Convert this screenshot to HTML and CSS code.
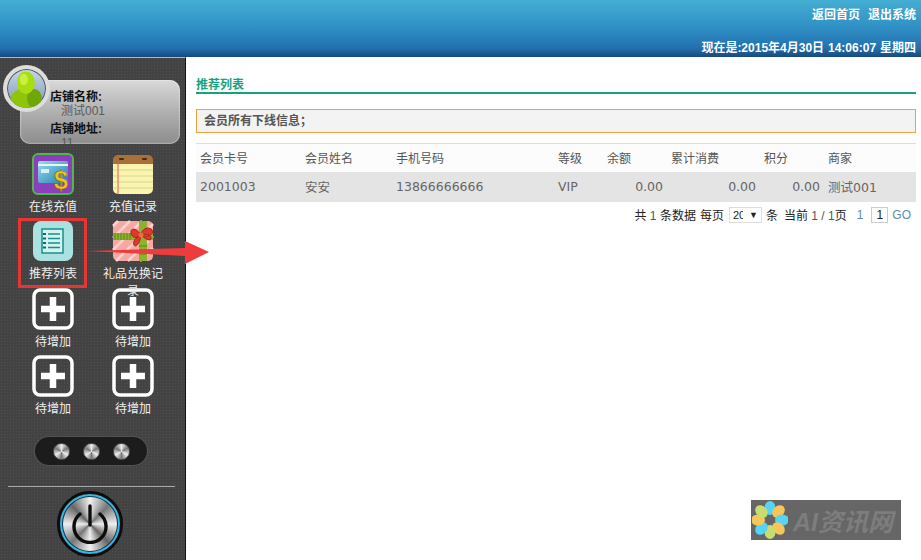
FILE: index.html
```html
<!DOCTYPE html>
<html lang="en">
<head>
    <meta charset="UTF-8">
    <title>推荐列表</title>
    <link rel="stylesheet" href="styles.css">
</head>
<body>
    <header class="top">
        <div class="top-links"><a>返回首页</a><a>退出系统</a></div>
        <div class="top-date">现在是:2015年4月30日 14:06:07 星期四</div>
    </header>
    <div class="main">
        <aside class="side">
            <div class="shop">
                <div class="avatar">
                    <svg width="38" height="38" viewBox="0 0 36 36">
                        <ellipse cx="17" cy="29" rx="15" ry="12" fill="#8fc40a"/>
                        <ellipse cx="25" cy="27" rx="7" ry="9" fill="#6fa708"/>
                        <ellipse cx="17" cy="12" rx="8.5" ry="10.5" fill="#a6de12"/>
                        <ellipse cx="15" cy="9" rx="4" ry="5.5" fill="#c9f03e"/>
                    </svg>
                </div>
                <dl class="shop-info">
                    <dt>店铺名称:</dt>
                    <dd>测试001</dd>
                    <dt>店铺地址:</dt>
                    <dd>11</dd>
                </dl>
            </div>
            <nav class="menu">
                <a class="menu-item">
                    <svg class="icon" viewBox="0 0 42 42">
                        <defs>
                            <linearGradient id="card" x1="0" y1="0" x2="1" y2="1">
                                <stop offset="0" stop-color="#9fdcea"/>
                                <stop offset="1" stop-color="#1f7fb0"/>
                            </linearGradient>
                        </defs>
                        <rect x="1" y="1" width="40" height="40" rx="5" fill="#8b3fbf" stroke="#4fb848" stroke-width="2"/>
                        <rect x="6" y="8" width="30" height="22" rx="2" fill="url(#card)"/>
                        <rect x="6" y="11" width="30" height="2" fill="#e4f6fa"/>
                        <rect x="9" y="16" width="8" height="4" fill="#d7eef5"/>
                        <text x="29" y="36" class="dollar">$</text>
                    </svg>
                    <span>在线充值</span>
                </a>
                <a class="menu-item">
                    <svg class="icon" viewBox="0 0 42 42">
                        <rect x="1" y="4" width="40" height="37" rx="5" fill="#fbf3ae"/>
                        <path d="M1 17h40M1 23h40M1 29h40M1 35h40" stroke="#cfd99a" stroke-width="1"/>
                        <path d="M6 10v31" stroke="#ee8a6a" stroke-width="1.5"/>
                        <path d="M1 11v-4a5 5 0 0 1 5-5h30a5 5 0 0 1 5 5v4z" fill="#a8703a"/>
                        <rect x="7" y="5" width="5" height="2" rx="1" fill="#4a2c12"/>
                        <rect x="30" y="5" width="5" height="2" rx="1" fill="#4a2c12"/>
                    </svg>
                    <span>充值记录</span>
                </a>
                <a class="menu-item">
                    <svg class="icon" viewBox="0 0 42 42">
                        <rect x="1" y="1" width="40" height="40" rx="8" fill="#a9e2e0"/>
                        <rect x="10" y="9" width="21" height="24" fill="#d5f2ef" stroke="#14908c" stroke-width="1.5"/>
                        <path d="M16 14h12M16 18.500h12M16 23h12M16 27.500h12" stroke="#14908c" stroke-width="1.5"/>
                        <path d="M11 14h3M11 18.500h3M11 23h3M11 27.500h3" stroke="#0c6e6c" stroke-width="2.200"/>
                    </svg>
                    <span>推荐列表</span>
                </a>
                <a class="menu-item">
                    <svg class="icon" viewBox="0 0 42 42">
                        <rect x="1" y="1" width="40" height="40" rx="5" fill="#f6a9a3"/>
                        <path d="M6 1l-5 5M18 1L1 18M30 1L1 30M41 4L4 41M41 16L16 41M41 28L28 41" stroke="#fbd3cf" stroke-width="2.500"/>
                        <rect x="1" y="13" width="40" height="7" fill="#8cb32c"/>
                        <rect x="27" y="1" width="8" height="40" fill="#8cb32c"/>
                        <path d="M3 13v7M6 13v7M9 13v7M12 13v7M15 13v7M18 13v7M27 26h8M27 30h8M27 34h8" stroke="#5f8418" stroke-width="1"/>
                        <path d="M29 15c-5-8-11-7-10-2s5 6 10 2c1-7 8-9 11-5s-4 8-11 5c-5 2-9 7-7 10s6-2 7-10c3 3 9 7 10 4s-3-6-10-4z" fill="#dd3a2c" stroke="#a8211a" stroke-width="1"/>
                        <circle cx="29" cy="15" r="2.500" fill="#f0694f"/>
                    </svg>
                    <span>礼品兑换记录</span>
                </a>
                <a class="menu-item">
                    <svg class="icon" viewBox="0 0 42 42"><use href="#plus"/></svg>
                    <span>待增加</span>
                </a>
                <a class="menu-item">
                    <svg class="icon" viewBox="0 0 42 42"><use href="#plus"/></svg>
                    <span>待增加</span>
                </a>
                <a class="menu-item">
                    <svg class="icon" viewBox="0 0 42 42"><use href="#plus"/></svg>
                    <span>待增加</span>
                </a>
                <a class="menu-item">
                    <svg class="icon" viewBox="0 0 42 42"><use href="#plus"/></svg>
                    <span>待增加</span>
                </a>
            </nav>
            <div class="knobs"><i></i><i></i><i></i></div>
            <div class="side-foot">
                <div class="power">
                    <svg width="40" height="40" viewBox="0 0 40 40" fill="none" stroke="#0d0d0d" stroke-width="3.400" stroke-linecap="round">
                        <path d="M10 10a16 16 0 1 0 20 0"/>
                        <path d="M20 2v19"/>
                    </svg>
                </div>
            </div>
        </aside>
        <main class="content">
            <h2 class="title"><span>推荐列表</span></h2>
            <div class="notice">会员所有下线信息；</div>
            <table class="list">
                <colgroup>
                    <col class="c1"><col class="c2"><col class="c3"><col class="c4">
                    <col class="c5"><col class="c6"><col class="c7"><col class="c8">
                </colgroup>
                <thead>
                    <tr>
                        <th>会员卡号</th><th>会员姓名</th><th>手机号码</th><th>等级</th>
                        <th>余额</th><th>累计消费</th><th>积分</th><th>商家</th>
                    </tr>
                </thead>
                <tbody>
                    <tr>
                        <td>2001003</td><td>安安</td><td>13866666666</td><td>VIP</td>
                        <td class="num">0.00</td><td class="num">0.00</td><td class="num">0.00</td><td>测试001</td>
                    </tr>
                </tbody>
            </table>
            <div class="pager">
                <span class="page-total">共 <b>1</b> 条数据</span>
                <span>每页</span>
                <span class="page-size"><em>20</em><i>▼</i></span>
                <span>条</span>
                <span class="page-now">当前 <b>1 / 1</b>页</span>
                <a>1</a>
                <span class="page-input">1</span>
                <a class="page-go">GO</a>
            </div>
        </main>
    </div>

    <svg class="defs" width="0" height="0">
        <symbol id="plus" viewBox="0 0 42 42">
            <rect x="2" y="2" width="38" height="38" rx="6" fill="none" stroke="#fff" stroke-width="3.500"/>
            <path d="M21 9v24M9 21h24" stroke="#fff" stroke-width="6.500"/>
        </symbol>
    </svg>

    <div class="mark-box"></div>
    <svg class="mark-arrow" width="122" height="24" viewBox="0 0 122 24">
        <polygon points="0,10 98,7 98,0 122,11 98,23 98,15" fill="#ee3b3b"/>
    </svg>

    <div class="watermark">
        <svg width="36" height="40" viewBox="0 0 36 40">
            <g transform="translate(18 20)">
                <ellipse cy="-12" rx="5.500" ry="7" fill="#55d4f4"/>
                <ellipse cy="-12" rx="5.500" ry="7" fill="#f7c65a" transform="rotate(45)"/>
                <ellipse cy="-12" rx="5.500" ry="7" fill="#55d4f4" transform="rotate(90)"/>
                <ellipse cy="-12" rx="5.500" ry="7" fill="#f7c65a" transform="rotate(135)"/>
                <ellipse cy="-12" rx="5.500" ry="7" fill="#c9dc70" transform="rotate(180)"/>
                <ellipse cy="-12" rx="5.500" ry="7" fill="#55d4f4" transform="rotate(225)"/>
                <ellipse cy="-12" rx="5.500" ry="7" fill="#f7c65a" transform="rotate(270)"/>
                <ellipse cy="-12" rx="5.500" ry="7" fill="#c9dc70" transform="rotate(315)"/>
            </g>
        </svg>
        <span>AI资讯网</span>
    </div>
</body>
</html>
```
FILE: styles.css
```css
* {
    box-sizing: border-box;
}
body {
    margin: 0;
    height: 100vh;
    overflow: hidden;
    display: flex;
    flex-direction: column;
    background-color: #fff;
    color: #555;
    font-family: "Liberation Sans", "Noto Sans CJK SC", sans-serif;
    font-size: 12px;
}
.top {
    height: 57px;
    flex: none;
    padding: 8px 5px 0 0;
    background: linear-gradient(#45aed3 0, #2f8fc4 50%, #2170ae 85%, #17497c 100%);
    color: #fff;
    font-weight: bold;
    text-align: right;
}
.top-links {
    height: 14px;
    line-height: 14px;
}
.top-links a {
    margin-left: 8px;
}
.top-date {
    margin-top: 19px;
    line-height: 14px;
    word-spacing: 0.6px;
}
.main {
    flex: 1;
    display: flex;
    min-height: 0;
}

/* left column */
.side {
    width: 186px;
    flex: none;
    padding-top: 22px;
    background-color: #434343;
    background-image: radial-gradient(rgba(255,255,255,0.07) 0.7px, transparent 1px);
    background-size: 3px 3px;
    border-right: 1px solid #111;
    border-top: 1px solid #9cc3da;
    overflow: hidden;
}
.shop {
    position: relative;
    width: 160px;
    height: 64px;
    margin-left: 20px;
    border-radius: 10px;
    background: linear-gradient(#d9d9d9 0, #b4b4b4 45%, #8c8c8c 100%);
    box-shadow: inset 0 0 2px #fff;
}
.avatar {
    position: absolute;
    left: -17px;
    top: -15px;
    width: 47px;
    height: 47px;
    display: flex;
    align-items: center;
    justify-content: center;
    border-radius: 50%;
    border: 4px solid #ddd;
    background: linear-gradient(#c5d8ea, #7f97ac);
    box-shadow: inset 0 0 0 1px #555;
    overflow: hidden;
}
.shop-info {
    height: 64px;
    margin: 0;
    padding: 10px 0 0 30px;
    overflow: hidden;
    line-height: 14px;
}
.shop-info dt {
    color: #111;
    font-weight: bold;
}
.shop-info dd {
    margin: 0 0 4px 11px;
    color: #5a5a5a;
}
.menu {
    display: grid;
    grid-template-columns: 80px 80px;
    grid-auto-rows: 67.3px;
    margin: 9px 0 0 13px;
}
.menu-item {
    display: flex;
    flex-direction: column;
    align-items: center;
    color: #eee;
    line-height: 17px;
    text-align: center;
}
.menu-item span {
    position: relative;
    margin-top: 4px;
    width: 70px;
}
.icon {
    width: 42px;
    height: 42px;
    flex: none;
}
.dollar {
    fill: #f2c521;
    stroke: #8a6a10;
    stroke-width: 0.6;
    font-family: "Liberation Sans", sans-serif;
    font-size: 25px;
    font-weight: bold;
    text-anchor: middle;
}
.knobs {
    display: flex;
    justify-content: center;
    gap: 13px;
    align-items: center;
    width: 112px;
    height: 28px;
    margin: 15px 0 0 35px;
    border-radius: 14px;
    background: #1c1c1c;
    box-shadow: 0 0 1px 1px #555;
}
.knobs i {
    width: 17px;
    height: 17px;
    border-radius: 50%;
    background: conic-gradient(#eee, #777, #eee, #777, #eee, #777, #eee);
    border: 1px solid #555;
}
.side-foot {
    margin: 21px 10px 0 8px;
    padding-top: 4px;
    border-top: 1px solid #aaa;
    display: flex;
    justify-content: center;
}
.power {
    width: 66px;
    height: 66px;
    flex: none;
    margin-right: 3px;
    display: flex;
    align-items: center;
    justify-content: center;
    border-radius: 50%;
    border: 3px solid #0d0d0d;
    background: conic-gradient(#f0f0f0, #777, #eee, #666, #f0f0f0, #777, #eee, #666, #f0f0f0);
    box-shadow: inset 0 0 0 2px #3fb4e0, inset 0 0 0 3px #0f3a50;
}

/* right column */
.content {
    flex: 1;
    min-width: 0;
    padding: 20px 5px 0 10px;
}
.title {
    height: 17px;
    margin: 0 0 15px;
    padding-top: 1px;
    border-bottom: 2px solid #17a27e;
    color: #17a27e;
    font-size: 12px;
    line-height: 14px;
}
.notice {
    height: 24px;
    padding-left: 7px;
    border: 1px solid #efa33a;
    background-color: #f3f3f3;
    color: #555;
    font-weight: bold;
    line-height: 22px;
}
.list {
    width: 720px;
    margin-top: 10px;
    border-collapse: collapse;
    table-layout: fixed;
    border-top: 1px solid #ddd;
}
.c1 { width: 105px; }
.c2 { width: 91px; }
.c3 { width: 162px; }
.c4 { width: 49px; }
.c5 { width: 64px; }
.c6 { width: 93px; }
.c7 { width: 64px; }
.c8 { width: 92px; }
.list th {
    height: 28px;
    padding: 0 4px;
    font-weight: normal;
    text-align: left;
    background-color: #fcfcfc;
}
.list td {
    height: 30px;
    padding: 0 4px;
    background-color: #e4e4e4;
    color: #666;
    font-family: "DejaVu Sans", "Noto Sans CJK SC", sans-serif;
    font-size: 12.5px;
}
.list td.num {
    text-align: right;
}
.pager {
    display: flex;
    justify-content: flex-end;
    align-items: center;
    gap: 4px;
    height: 22px;
    margin-top: 2px;
    padding-right: 5px;
    color: #222;
}
.pager b {
    font-weight: normal;
    color: #555;
}
.pager a {
    color: #5b8bb5;
}
.page-now {
    margin: 0 6px 0 2px;
}
.page-size {
    display: flex;
    align-items: center;
    justify-content: space-between;
    width: 33px;
    height: 16px;
    margin-left: 1px;
    padding: 0 3px;
    border: 1px solid #ddd;
    overflow: hidden;
    font-size: 11px;
}
.page-size em {
    width: 10px;
    overflow: hidden;
    font-style: normal;
}
.page-size i {
    font-style: normal;
    font-size: 9px;
}
.page-input {
    width: 17px;
    height: 16px;
    margin-left: 4px;
    border: 1px solid #ccc;
    line-height: 15px;
    text-align: center;
}
.defs {
    position: absolute;
}

/* annotations lying over the screenshot */
.mark-box {
    position: absolute;
    left: 18px;
    top: 218px;
    width: 69px;
    height: 70px;
    border: 3px solid #e53535;
}
.mark-arrow {
    position: absolute;
    left: 87px;
    top: 241px;
}
.watermark {
    position: absolute;
    left: 751px;
    top: 500px;
    width: 150px;
    height: 40px;
    display: flex;
    align-items: center;
    gap: 5px;
    padding-left: 1px;
    background-color: #666;
    color: #7d7d7d;
    font-size: 25px;
    font-weight: bold;
    font-style: italic;
    white-space: nowrap;
    overflow: hidden;
}
```
